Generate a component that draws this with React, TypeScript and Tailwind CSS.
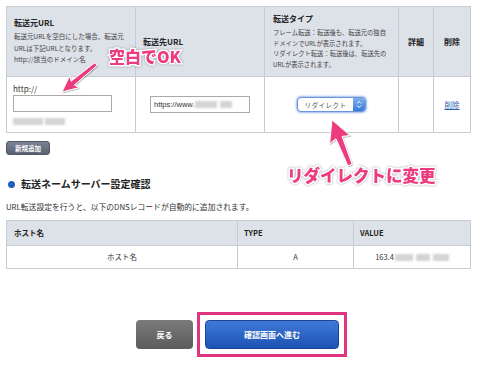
import React from "react";

const JP = '"Noto Sans CJK JP", "Noto Sans", "Liberation Sans", sans-serif';

function arrowPoints(tx: number, ty: number, hx: number, hy: number, sw: number, hl: number, hw: number) {
  const dx = hx - tx;
  const dy = hy - ty;
  const len = Math.hypot(dx, dy);
  const ux = dx / len;
  const uy = dy / len;
  const nx = -uy;
  const ny = ux;
  const bx = hx - ux * hl;
  const by = hy - uy * hl;
  const pts = [
    [tx + nx * sw * 0.35, ty + ny * sw * 0.35],
    [bx + nx * sw / 2, by + ny * sw / 2],
    [bx + nx * hw / 2 - ux * 2, by + ny * hw / 2 - uy * 2],
    [hx, hy],
    [bx - nx * hw / 2 - ux * 2, by - ny * hw / 2 - uy * 2],
    [bx - nx * sw / 2, by - ny * sw / 2],
    [tx - nx * sw * 0.35, ty - ny * sw * 0.35],
  ];
  return pts.map((p) => `${p[0].toFixed(1)},${p[1].toFixed(1)}`).join(" ");
}

function Blur({ w, className = "" }: { w: number; className?: string }) {
  return (
    <span
      className={`inline-block h-[7px] bg-[#d4d4d4] blur-[1.2px] ${className}`}
      style={{ width: w }}
    />
  );
}

export default function App() {
  return (
    <div
      className="relative w-[500px] h-[377px] bg-white overflow-hidden text-[#333] text-[8px] leading-[12px]"
      style={{ fontFamily: JP }}
    >
      <div className="pl-[6px] pt-[6px] flex flex-col items-start">
        {/* Table 1 */}
        <table className="border-collapse w-[464px] table-fixed">
          <colgroup>
            <col className="w-[129px]" />
            <col className="w-[129px]" />
            <col className="w-[134px]" />
            <col className="w-[35px]" />
            <col className="w-[37px]" />
          </colgroup>
          <tbody>
            <tr className="h-[70px] bg-[#dde1e8]">
              <td className="border border-[#c7ccd4] px-[7px] py-0 align-middle">
                <div className="text-[8px] font-bold leading-[12px] text-[#222]">転送元URL</div>
                <div className="text-[6.5px] leading-[11.5px] text-[#444] mt-[2px]">
                  転送元URLを空白にした場合、転送元
                  <br />
                  URLは下記URLとなります。
                  <br />
                  http://該当のドメイン名
                </div>
              </td>
              <td className="border border-[#c7ccd4] px-[7px] py-0 align-middle">
                <div className="text-[8px] font-bold text-[#222]">転送先URL</div>
              </td>
              <td className="border border-[#c7ccd4] px-[8px] py-0 align-middle">
                <div className="text-[8px] font-bold leading-[12px] text-[#222]">転送タイプ</div>
                <div className="text-[6.3px] leading-[10.5px] text-[#444] mt-[3px] whitespace-nowrap">
                  フレーム転送：転送後も、転送元の独自
                  <br />
                  ドメインでURLが表示されます。
                  <br />
                  リダイレクト転送：転送後は、転送先の
                  <br />
                  URLが表示されます。
                </div>
              </td>
              <td className="border border-[#c7ccd4] text-center align-middle">
                <span className="text-[8px] font-bold text-[#222]">詳細</span>
              </td>
              <td className="border border-[#c7ccd4] text-center align-middle">
                <span className="text-[8px] font-bold text-[#222]">削除</span>
              </td>
            </tr>
            <tr className="h-[56px] bg-white">
              <td className="border border-[#c7ccd4] px-[6px] py-0 align-middle">
                <div className="text-[8px] leading-[10px] text-[#333]">http://</div>
                <div className="w-[99px] h-[17px] border border-[#a9a9a9] bg-white mt-[1px]" />
                <div className="mt-[6px] flex gap-[2px]">
                  <Blur w={30} />
                  <Blur w={20} />
                </div>
              </td>
              <td className="border border-[#c7ccd4] align-middle">
                <div className="mx-auto w-[100px] h-[17px] border border-[#a9a9a9] bg-white flex items-center pl-[3px] gap-[1px]">
                  <span className="text-[7.5px] text-[#333]" style={{ fontFamily: '"Liberation Sans", sans-serif' }}>
                    https://www.
                  </span>
                  <Blur w={22} />
                  <Blur w={12} className="ml-[2px]" />
                </div>
              </td>
              <td className="border border-[#c7ccd4] align-middle">
                <div className="mx-auto w-[69px] h-[15px] rounded-[4px] border border-[#6b95d6] shadow-[0_0_2px_1px_rgba(90,140,220,0.6)] bg-white flex items-center overflow-hidden">
                  <span className="flex-1 text-center text-[6.5px] text-[#555] tracking-[0.5px]">リダイレクト</span>
                  <span className="w-[12px] h-full bg-gradient-to-b from-[#7fb0f0] to-[#3a78d8] flex items-center justify-center">
                    <svg width="6" height="9" viewBox="0 0 6 9">
                      <path d="M1 3.5 L3 1.5 L5 3.5 M1 5.5 L3 7.5 L5 5.5" stroke="white" strokeWidth="1" fill="none" />
                    </svg>
                  </span>
                </div>
              </td>
              <td className="border border-[#c7ccd4]" />
              <td className="border border-[#c7ccd4] text-center align-middle">
                <span className="text-[7.5px] text-[#2a5db0] underline">削除</span>
              </td>
            </tr>
          </tbody>
        </table>

        {/* 新規追加 */}
        <div className="mt-[8px] flex items-center justify-center w-[44px] h-[14px] rounded-[3px] bg-gradient-to-b from-[#7b8394] to-[#5a6272] border border-[#4f5664] text-white text-[6.5px] leading-[8px] font-bold">
          新規追加
        </div>

        {/* heading */}
        <div className="mt-[22px] flex items-center gap-[6px] pl-[2px] h-[14px]">
          <span className="w-[7px] h-[7px] rounded-full bg-[#1f5fbf]" />
          <span className="text-[10px] leading-[14px] font-bold text-[#222]">転送ネームサーバー設定確認</span>
        </div>

        <div className="mt-[10px] text-[7.8px] leading-[12px] text-[#333]">
          URL転送設定を行うと、以下のDNSレコードが自動的に追加されます。
        </div>

        {/* Table 2 */}
        <table className="mt-[7px] border-collapse w-[464px] table-fixed">
          <colgroup>
            <col className="w-[231px]" />
            <col className="w-[116px]" />
            <col className="w-[117px]" />
          </colgroup>
          <tbody>
            <tr className="h-[25px] bg-[#dde1e8]">
              <td className="border border-[#c7ccd4] px-[7px] text-[7.5px] font-bold text-[#222]">ホスト名</td>
              <td className="border border-[#c7ccd4] px-[6px] text-[7.5px] font-bold text-[#222]">TYPE</td>
              <td className="border border-[#c7ccd4] px-[6px] text-[7.5px] font-bold text-[#222]">VALUE</td>
            </tr>
            <tr className="h-[23px] bg-white">
              <td className="border border-[#c7ccd4] text-center text-[7.5px] text-[#333]">ホスト名</td>
              <td className="border border-[#c7ccd4] text-center text-[7.5px] text-[#333]">A</td>
              <td className="border border-[#c7ccd4] text-[7.5px] text-[#333]">
                <div className="flex items-center justify-center gap-[1px]">
                  <span>163.4</span>
                  <Blur w={18} />
                  <Blur w={14} className="ml-[2px]" />
                  <Blur w={16} className="ml-[2px]" />
                </div>
              </td>
            </tr>
          </tbody>
        </table>
      </div>

      {/* bottom buttons */}
      <div className="mt-[43px] w-[483px] flex justify-center items-center gap-[4px]">
        <div className="w-[57px] h-[29px] rounded-[4px] bg-gradient-to-b from-[#7a7a7a] to-[#5c5c5c] flex items-center justify-center text-white text-[8px] font-bold">
          戻る
        </div>
        <div className="border-[3px] border-[#e0357e] p-[5px]">
          <div className="w-[134px] h-[29px] rounded-[4px] bg-gradient-to-b from-[#3f7ad8] to-[#1e52b3] border border-[#1a4596] flex items-center justify-center text-white text-[8px] font-bold">
            確認画面へ進む
          </div>
        </div>
      </div>

      {/* annotations */}
      <svg className="absolute left-0 top-0 pointer-events-none" width="500" height="377" viewBox="0 0 500 377">
        <defs>
          <filter id="sh" x="-20%" y="-20%" width="140%" height="140%">
            <feDropShadow dx="0.6" dy="0.8" stdDeviation="0.7" floodColor="#000" floodOpacity="0.35" />
          </filter>
        </defs>
        <polygon
          points={arrowPoints(96, 64, 62, 92, 5, 14, 15)}
          fill="#ec3b7f"
          stroke="white"
          strokeWidth="1"
          strokeLinejoin="round"
          filter="url(#sh)"
        />
        <polygon
          points={arrowPoints(350, 165, 332, 120, 6.5, 19, 22)}
          fill="#ec3b7f"
          stroke="white"
          strokeWidth="1"
          strokeLinejoin="round"
          filter="url(#sh)"
        />
      </svg>
      <div
        className="absolute left-[109px] top-[46px] text-[16px] leading-[20px] font-black text-[#ec3b7f] [paint-order:stroke_fill] [-webkit-text-stroke:3px_white] drop-shadow-[0.6px_0.8px_0.8px_rgba(0,0,0,0.35)] whitespace-nowrap"
        style={{ fontFamily: JP }}
      >
        空白でOK
      </div>
      <div
        className="absolute left-[287px] top-[165px] text-[16.5px] leading-[21px] font-black text-[#ec3b7f] [paint-order:stroke_fill] [-webkit-text-stroke:3px_white] drop-shadow-[0.6px_0.8px_0.8px_rgba(0,0,0,0.35)] whitespace-nowrap"
        style={{ fontFamily: JP }}
      >
        リダイレクトに変更
      </div>
    </div>
  );
}
